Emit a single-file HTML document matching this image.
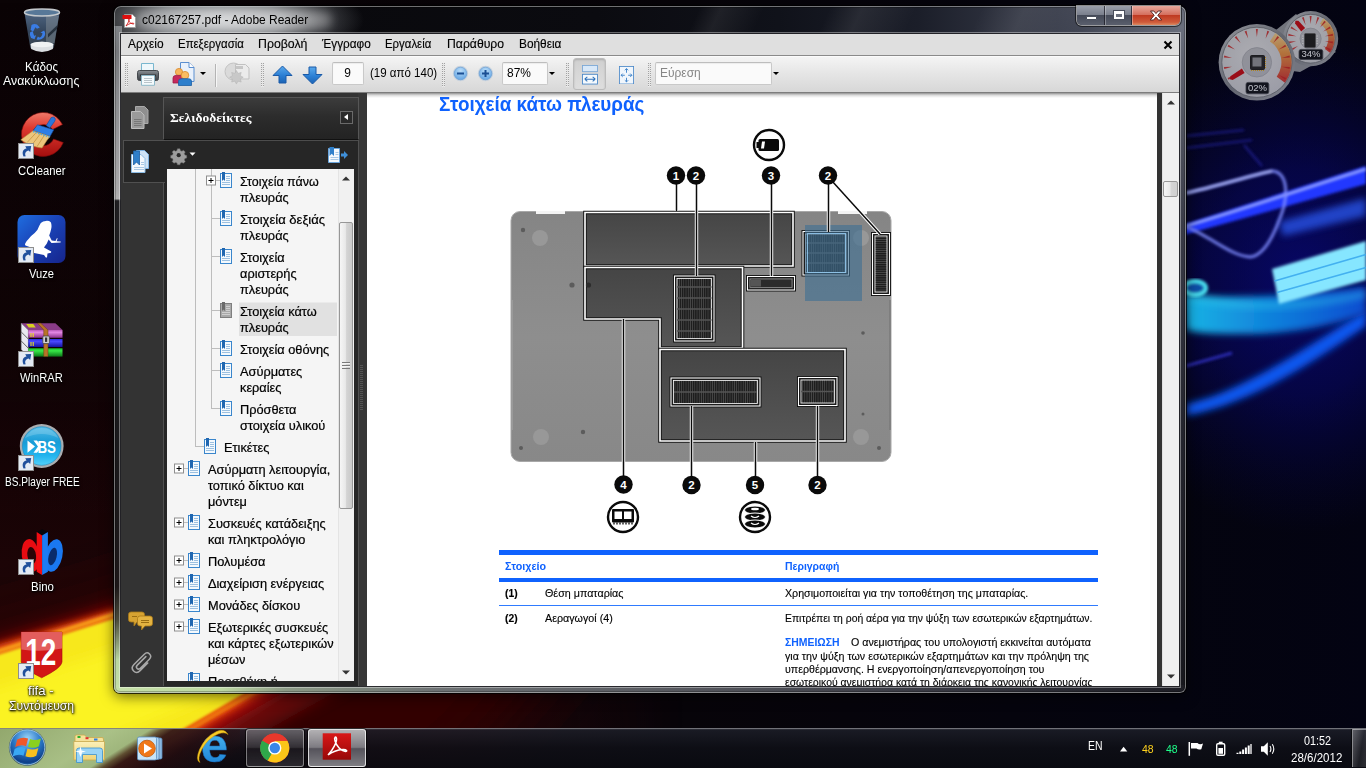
<!DOCTYPE html>
<html lang="el">
<head>
<meta charset="utf-8">
<title>c02167257.pdf - Adobe Reader</title>
<style>
*{box-sizing:border-box;margin:0;padding:0}
html,body{width:1366px;height:768px;overflow:hidden;background:#060409}
body{position:relative;font-family:"Liberation Sans","DejaVu Sans",sans-serif;font-size:12px;color:#000}
.abs{position:absolute}
.t{position:absolute;white-space:nowrap;transform-origin:0 0}
#wall{position:absolute;left:0;top:0;width:1366px;height:768px}
#win{position:absolute;left:114px;top:6px;width:1072px;height:687px;border-radius:7px 7px 6px 6px;
 box-shadow:0 0 0 1px rgba(0,0,0,.75),0 3px 14px rgba(0,0,0,.6)}
#frame{position:absolute;left:0;top:0;width:100%;height:100%;border-radius:7px 7px 6px 6px;overflow:hidden}
#client{position:absolute;left:7px;top:28px;width:1058px;height:652px;background:#fff;overflow:hidden;box-shadow:0 0 0 1px rgba(20,20,25,.85),0 0 0 2px rgba(255,255,255,.38)}
#title{position:absolute;left:28px;top:4px;height:20px;line-height:20px;font-size:13.2px;color:#000;white-space:nowrap;transform:scaleX(.907);transform-origin:0 0}
#menubar{position:absolute;left:0;top:0;width:1058px;height:22px;background:#dfdfdf;border-bottom:1px solid #8a8a8a}
#toolbar{position:absolute;left:0;top:22px;width:1058px;height:37px;background:linear-gradient(#f4f4f4,#e6e6e6 45%,#d7d7d7);border-bottom:1px solid #7d7d7d;border-top:1px solid #fbfbfb}
#nav{position:absolute;left:0;top:59px;width:246px;height:593px;background:#333}
#doc{position:absolute;left:246px;top:59px;width:812px;height:593px;background:#fff;overflow:hidden}
#taskbar{position:absolute;left:0;top:728px;width:1366px;height:40px}
.grip{position:absolute;top:6px;width:3px;height:24px;background:linear-gradient(90deg,transparent 1px,#e4e4e4 1px 2px,transparent 2px),repeating-linear-gradient(#a2a2a2 0 1px,#ececec 1px 2px)}
.tbox{position:absolute;top:5px;height:23px;background:#fafafa;border:1px solid #c9c9c9;border-top-color:#bdbdbd;box-shadow:inset 0 1px 1px rgba(0,0,0,.06);border-radius:2px;font-size:12.6px;line-height:20px}
.tarrow{position:absolute;top:15px;width:0;height:0;border-left:3px solid transparent;border-right:3px solid transparent;border-top:3.5px solid #000}
</style>
</head>
<body>
<svg id="wall" viewBox="0 0 1366 768">
<defs>
 <filter id="b2" x="-20%" y="-20%" width="140%" height="140%"><feGaussianBlur stdDeviation="1.5"/></filter>
 <filter id="b4" x="-30%" y="-60%" width="160%" height="220%"><feGaussianBlur stdDeviation="3.5"/></filter>
 <filter id="b8" x="-30%" y="-30%" width="160%" height="160%"><feGaussianBlur stdDeviation="7"/></filter>
 <filter id="b10" x="-30%" y="-30%" width="160%" height="160%"><feGaussianBlur stdDeviation="10"/></filter>
 <filter id="b16" x="-30%" y="-30%" width="160%" height="160%"><feGaussianBlur stdDeviation="16"/></filter>
 <filter id="b30" x="-50%" y="-50%" width="200%" height="200%"><feGaussianBlur stdDeviation="34"/></filter>
 <linearGradient id="hbase" x1="0" y1="0" x2="1" y2="0"><stop offset="0" stop-color="#0a0305"/><stop offset=".5" stop-color="#070409"/><stop offset=".86" stop-color="#04040f"/><stop offset="1" stop-color="#030312"/></linearGradient>
 <linearGradient id="lred" x1="0" y1="0" x2="0" y2="1"><stop offset="0" stop-color="#200406" stop-opacity="0"/><stop offset=".45" stop-color="#200406" stop-opacity=".25"/><stop offset=".75" stop-color="#2a0507" stop-opacity=".6"/><stop offset="1" stop-color="#340608" stop-opacity=".9"/></linearGradient>
 <linearGradient id="lfade" x1="0" y1="0" x2="1" y2="0"><stop offset="0" stop-color="#fff"/><stop offset=".25" stop-color="#fff"/><stop offset=".5" stop-color="#000"/></linearGradient>
 <radialGradient id="rglow" gradientUnits="userSpaceOnUse" cx="1300" cy="285" r="210" gradientTransform="translate(0 -60) scale(1 1.2)"><stop offset="0" stop-color="#0a0aa0" stop-opacity=".6"/><stop offset=".45" stop-color="#080890" stop-opacity=".4"/><stop offset="1" stop-color="#060660" stop-opacity="0"/></radialGradient>
 <linearGradient id="tubeG" x1="0" y1="0" x2="1" y2="0"><stop offset="0" stop-color="#1ab4e4"/><stop offset=".45" stop-color="#1084dc"/><stop offset="1" stop-color="#0a4cd0"/></linearGradient>
 <filter id="b1"><feGaussianBlur stdDeviation=".7"/></filter>
 <mask id="lm"><rect width="1366" height="768" fill="url(#lfade)"/></mask>
</defs>
<rect width="1366" height="768" fill="url(#hbase)"/>
<rect x="0" y="0" width="1366" height="768" fill="url(#lred)" mask="url(#lm)"/>
<!-- flame bottom-left -->
<g>
 <path d="M-60 655 L114 604 L520 462 L640 560 L520 700 L440 790 L-60 790Z" fill="#320305" filter="url(#b30)"/>
 <path d="M-40 656 L114 609 L330 535 L400 580 L292 692 L236 728 L170 790 L-40 790Z" fill="#a80e0a" filter="url(#b10)"/>
 <path d="M-40 656 L114 610 L400 513 L420 600 L253 698 L128 774 L-40 790Z" fill="#e8480c" filter="url(#b4)"/>
 <path d="M-40 662 L0 650.500 L114 614.500 L400 517" stroke="#f8a018" stroke-width="4" fill="none" filter="url(#b2)"/>
 <path d="M-40 667 L0 654 L114 618.500 L400 523 L400 602 L245 693 L117 768 L-40 790Z" fill="#f7e81e" filter="url(#b2)"/>
 <path d="M-40 700 L114 650 L300 590 L300 640 L200 700 L60 760 L-40 780Z" fill="#fbf324" filter="url(#b8)"/>
 <path d="M119 771 L248 695.500 L402 605" stroke="#f07a10" stroke-width="4" fill="none" filter="url(#b2)"/>
 <path d="M150 768 L270 700 L400 626 L430 640 L300 712 L200 768Z" fill="#6a0808" opacity=".75" filter="url(#b8)"/>
</g>
<!-- blue smoke right -->
<g>
 <rect x="1100" y="0" width="266" height="640" fill="url(#rglow)"/>
 <path d="M1186 136 L1244 130 M1186 148 L1252 140 M1244 145 L1262 166" stroke="#2525a8" stroke-width="2" opacity=".7" fill="none" filter="url(#b2)"/>
 <path d="M1279 222 L1366 198 L1366 216 L1283 236Z" fill="#2a58f0" opacity=".75" filter="url(#b4)"/>
 <path d="M1180 226 L1366 166 L1366 184 L1180 236Z" fill="#2438ff" filter="url(#b2)"/>
 <path d="M1186 226 C1240 210,1300 190,1366 169" stroke="#aebcff" stroke-width="2.500" fill="none" opacity=".9" filter="url(#b2)"/>
 <path d="M1186 193 C1215 187,1248 176,1272 171 C1288 172,1289 196,1280 218 C1272 240,1262 256,1250 257 C1236 256,1222 246,1208 238 C1198 232,1190 228,1184 226" stroke="#7f8cff" stroke-width="3" fill="none" opacity=".9" filter="url(#b2)"/>
 <path d="M1186 193 C1215 187,1248 176,1272 171" stroke="#dfe4ff" stroke-width="1.500" fill="none" opacity=".8" filter="url(#b2)"/>
 <path d="M1186 404 C1240 392,1300 352,1366 310 L1366 326 C1310 364,1250 404,1186 416Z" fill="#0c58f0" filter="url(#b4)"/>
 <path d="M1186 366 L1232 353" stroke="#3838d8" stroke-width="2.500" opacity=".85" filter="url(#b2)"/>
 <path d="M1184 294 C1230 300,1300 296,1366 286 L1366 314 C1330 326,1290 334,1250 334 C1220 334,1200 334,1186 330Z" fill="url(#tubeG)" filter="url(#b4)"/>
 <path d="M1190 297 C1250 312,1320 305,1366 294" stroke="#38d8f0" stroke-width="6" fill="none" opacity=".4" filter="url(#b4)"/>
 <ellipse cx="1195" cy="288" rx="11" ry="7" fill="#0a50a8" stroke="#48e0f0" stroke-width="4" filter="url(#b2)"/>
 <path d="M1272 269 L1366 241 L1366 280 L1279 304Z" fill="#86e6ff" filter="url(#b2)"/>
 <path d="M1274.500 281 L1366 254.500 M1277 292.500 L1366 267.500" stroke="#38a8ee" stroke-width="1.800" opacity=".85" filter="url(#b1)"/>
</g>

</svg>

<div id="desktop" class="abs" style="left:0;top:0;width:114px;height:728px">

<svg class="abs" style="left:0;top:0" width="114" height="728" viewBox="0 0 114 728" font-family="Liberation Sans, sans-serif">
<defs>
 <linearGradient id="binG" x1="0" y1="0" x2="0" y2="1"><stop offset="0" stop-color="#4e6480"/><stop offset=".5" stop-color="#33445a"/><stop offset="1" stop-color="#3c4650"/></linearGradient>
 <linearGradient id="ccG" x1="0" y1="0" x2="0" y2="1"><stop offset="0" stop-color="#f07a6a"/><stop offset=".35" stop-color="#de3a30"/><stop offset="1" stop-color="#a40e0e"/></linearGradient>
 <linearGradient id="wrP" x1="0" y1="0" x2="0" y2="1"><stop offset="0" stop-color="#b858b8"/><stop offset=".3" stop-color="#e488e4"/><stop offset="1" stop-color="#8a308a"/></linearGradient>
 <linearGradient id="wrB" x1="0" y1="0" x2="0" y2="1"><stop offset="0" stop-color="#2a2ae0"/><stop offset=".3" stop-color="#4a4aff"/><stop offset="1" stop-color="#1414a0"/></linearGradient>
 <linearGradient id="wrGn" x1="0" y1="0" x2="0" y2="1"><stop offset="0" stop-color="#18b828"/><stop offset=".3" stop-color="#38e848"/><stop offset="1" stop-color="#0c7818"/></linearGradient>
 <linearGradient id="vzG" x1="0" y1="0" x2="1" y2="1"><stop offset="0" stop-color="#1f6ee0"/><stop offset=".45" stop-color="#1a44b8"/><stop offset="1" stop-color="#16248c"/></linearGradient>
 <linearGradient id="bsG" x1="0" y1="0" x2="0" y2="1"><stop offset="0" stop-color="#52bce8"/><stop offset=".4" stop-color="#189cd6"/><stop offset=".75" stop-color="#22b4ee"/><stop offset="1" stop-color="#52d0fa"/></linearGradient>
 <linearGradient id="ffG" x1="0" y1="0" x2="0" y2="1"><stop offset="0" stop-color="#e03a3a"/><stop offset=".5" stop-color="#d01818"/><stop offset="1" stop-color="#b01010"/></linearGradient>
</defs>
<!-- recycle bin -->
<g>
 <path d="M24.500 13 L30.300 48 Q42 54.500 53.800 48 L59.500 13Z" fill="url(#binG)"/>
 <path d="M46 16 L58.800 16 L54.500 43 L46 43Z" fill="#8a929a" opacity=".45"/>
 <path d="M48 34 L57.500 25 L57 29 L48 37.500Z" fill="#1a2430" opacity=".8"/>
 <ellipse cx="42" cy="12.500" rx="17.500" ry="3.400" fill="#587898" stroke="#c4c8cc" stroke-width="1.500"/>
 <path d="M30.600 44 Q42 39.500 53.400 44 L52.800 49 Q42 55 31.200 49Z" fill="#dcdfe2"/>
 <ellipse cx="42" cy="44.500" rx="11.300" ry="2.800" fill="#f0f2f3"/>
 <path d="M31.500 25 q2.500 -1.500 5.500 -.5 l2.800 3 l-2.800 1.200 l-1.600 -1.400 l-2.200 4.200 l-2.600 -1.600z M30 32.500 l2.600 -1.400 l1.500 4.600 l2 -.4 l-1.600 4 l-3.400 -1.200 q-1.800 -2.800 -1.100 -5.600z M36.500 39.600 l1.400 -3 l1.400 1 q2.600 -.6 3.200 -4.400 l-2 -.6 l3.600 -2.200 q2.400 3.400 -.6 7.400 q-3 2.800 -7 1.800z" fill="#3a7ce4"/>
</g>
<!-- ccleaner -->
<g>
 <path d="M62.500 124.500 A21.700 22 0 1 0 63.300 142.600 L53.500 139 A11 10.500 0 1 1 52.600 129.600Z" fill="url(#ccG)" stroke="#7a0808" stroke-width=".6"/>
 <path d="M51.200 117.600 q2.200 -1.400 3.800 .4 q.8 1.600 -.4 3.400 l-4.800 6.600 l-3.600 -2.400z" fill="#2a76dc" stroke="#164a9c" stroke-width=".6"/>
 <path d="M37.500 124.800 L53.750 129.800 L50 136.500 L33 130.700Z" fill="#2e7ee4" stroke="#164a9c" stroke-width=".6"/>
 <path d="M33 130.700 L50 136.500 L46.700 140.700 L42 148 Q31 147 20.800 139.800Z" fill="#ecc67c" stroke="#b8893a" stroke-width=".6"/>
 <path d="M36.500 132.300 L27 142.600 M40.500 133.600 L32 144.800 M44.500 135 L37 146.600" stroke="#c89a48" stroke-width=".9"/>
 <path d="M33 131.500 L49.600 137.200" stroke="#4aa8e8" stroke-width="1.400" stroke-dasharray="1.500 1.200"/>
</g>
<g transform="translate(18,143)"><rect x=".5" y=".5" width="15" height="15" fill="#e3eaf4" stroke="#8e8e8e" stroke-width="1"/><path d="M5.500 13.500 C3.500 9,5.500 5.800,8.500 5.600 L7.200 3.200 L13.200 3 L12.200 9 L10.600 7.400 C8 8,6.200 10,7.800 13.200Z" fill="#20509c"/></g>
<!-- vuze -->
<g>
 <rect x="17.500" y="215" width="48" height="48" rx="7" fill="url(#vzG)"/>
 <path d="M45.800 220.900 Q49 220.500 50.800 222.200 Q52 225 51.200 228.800 Q50.500 232.500 49.200 235.500 L51.700 240.600 L55.500 241 L57 238 L57.600 238.400 L56.600 241.200 L60.800 241.600 L60.600 242.600 L51.500 243 L48.600 239.600 L46.700 243.800 Q45 246 44 247.500 L51.200 251.600 L51 252.800 L47.500 253.600 L47 257.400 L45.800 257.600 L44 255 L34.200 253 Q32 251 31 247.500 L25.500 245.600 Q24.500 244.500 25.500 243 Q27 240.500 29 238.600 Q30.500 236.500 31.700 235.500 Q35 233 37.500 229.700 Q39 226 40.800 223 Q43 221 45.800 220.900Z" fill="#fff"/>
</g>
<g transform="translate(18,247)"><rect x=".5" y=".5" width="15" height="15" fill="#e3eaf4" stroke="#8e8e8e" stroke-width="1"/><path d="M5.500 13.500 C3.500 9,5.500 5.800,8.500 5.600 L7.200 3.200 L13.200 3 L12.200 9 L10.600 7.400 C8 8,6.200 10,7.800 13.200Z" fill="#20509c"/></g>
<!-- winrar -->
<g>
 <path d="M21.250 323.250 H55.400 L62.500 330 H28.300Z" fill="#8a3c88"/>
 <path d="M26.250 324 h7 l2.500 3.500 h-7z" fill="#d8d020"/>
 <path d="M21.250 323.250 L28.300 330 V356.600 L21.250 349.500Z" fill="#e8e8f0" stroke="#8a8a98" stroke-width=".5"/>
 <path d="M21.250 332 L28.300 339 M21.250 341 L28.300 348.200" stroke="#555" stroke-width=".9"/>
 <rect x="28.300" y="330" width="34.200" height="7.800" fill="url(#wrP)"/>
 <rect x="28.300" y="339" width="34.200" height="8" fill="url(#wrB)"/>
 <rect x="28.300" y="348.250" width="34.200" height="8.350" fill="url(#wrGn)"/>
 <path d="M31 333 v4 M33.200 333 v4 M31 342 v4 M33.200 342 v4" stroke="#e8e020" stroke-width="1.100"/>
 <path d="M37.500 323.250 h3.300 l7.200 6.750 v26.600 h-4.250 v-26.600z" fill="#b87428" stroke="#6a3c0c" stroke-width=".5"/>
 <rect x="42.800" y="336" width="6.600" height="7.600" rx="1" fill="#d0d0d4" stroke="#444" stroke-width=".8"/><rect x="45" y="337.500" width="2.200" height="4.400" fill="#333"/>
</g>
<g transform="translate(18,351)"><rect x=".5" y=".5" width="15" height="15" fill="#e3eaf4" stroke="#8e8e8e" stroke-width="1"/><path d="M5.500 13.500 C3.500 9,5.500 5.800,8.500 5.600 L7.200 3.200 L13.200 3 L12.200 9 L10.600 7.400 C8 8,6.200 10,7.800 13.200Z" fill="#20509c"/></g>
<!-- bs.player -->
<g>
 <circle cx="41.700" cy="446" r="21.900" fill="#a9adb0"/>
 <circle cx="41.700" cy="446" r="19.300" fill="url(#bsG)" stroke="#1a88c0" stroke-width=".6"/>
 <path d="M25 438 A19 19 0 0 1 58.400 438 Q41.700 430 25 438Z" fill="#fff" opacity=".18"/>
 <path d="M27.500 440.600 L35 446.600 L27.500 452.700Z" fill="#fff"/>
 <path d="M33.500 440.600 h3.500 l4.500 6 l-4.500 6.100 h-3.500 l4.500 -6.100z" fill="#fff"/>
 <text x="46.700" y="452.700" font-size="16.800" font-weight="700" fill="#fff" text-anchor="middle" textLength="18.500" lengthAdjust="spacingAndGlyphs">BS</text>
</g>
<g transform="translate(18,455)"><rect x=".5" y=".5" width="15" height="15" fill="#e3eaf4" stroke="#8e8e8e" stroke-width="1"/><path d="M5.500 13.500 C3.500 9,5.500 5.800,8.500 5.600 L7.200 3.200 L13.200 3 L12.200 9 L10.600 7.400 C8 8,6.200 10,7.800 13.200Z" fill="#20509c"/></g>
<!-- bino -->
<g>
 <path d="M36.700 532 L42.100 529.200 L47.900 532 L42.100 535.400Z" fill="#05060c"/>
 <ellipse cx="30.600" cy="555.500" rx="8.800" ry="16.500" fill="#e80c12" transform="rotate(-8 30.600 555.500)"/>
 <ellipse cx="31.700" cy="555.500" rx="4.300" ry="8.500" fill="#2a0406" transform="rotate(-8 31.700 555.500)"/>
 <path d="M36.700 532 L42.100 535.400 V575 L36.700 571.700Z" fill="#f00c12"/>
 <ellipse cx="53.800" cy="555.500" rx="8.600" ry="16.500" fill="#1a78f0" transform="rotate(12 53.800 555.500)"/>
 <ellipse cx="52.600" cy="556.500" rx="4" ry="9" fill="#0a2c6a" transform="rotate(14 52.600 556.500)"/>
 <path d="M42.100 535.400 L47.900 532 V571.700 L42.100 575Z" fill="#1c7cf4"/>
</g>
<g transform="translate(18,559)"><rect x=".5" y=".5" width="15" height="15" fill="#e3eaf4" stroke="#8e8e8e" stroke-width="1"/><path d="M5.500 13.500 C3.500 9,5.500 5.800,8.500 5.600 L7.200 3.200 L13.200 3 L12.200 9 L10.600 7.400 C8 8,6.200 10,7.800 13.200Z" fill="#20509c"/></g>
<!-- fifa -->
<g>
 <path d="M21.250 632 H62 V662 Q61.500 668 41.700 677.800 Q21.800 668 21.250 662Z" fill="#d21616" stroke="#a80c0c" stroke-width=".6"/>
 <path d="M21.250 632 H62 V648.500 Q41.700 652.500 21.250 649.500Z" fill="#e66a6a" opacity=".85"/>
 <text x="40.800" y="665" font-size="37.700" font-weight="700" fill="#fff" text-anchor="middle" textLength="31" lengthAdjust="spacingAndGlyphs">12</text>
</g>
<g transform="translate(18,663)"><rect x=".5" y=".5" width="15" height="15" fill="#e3eaf4" stroke="#8e8e8e" stroke-width="1"/><path d="M5.500 13.500 C3.500 9,5.500 5.800,8.500 5.600 L7.200 3.200 L13.200 3 L12.200 9 L10.600 7.400 C8 8,6.200 10,7.800 13.200Z" fill="#20509c"/></g>
</svg>

<span class="t" style="left:24.7px;top:58.6px;font-size:12.6px;line-height:16px;transform:scaleX(0.929);color:#fff;text-shadow:0 1px 2px #000,0 0 2px #000,1px 1px 3px rgba(0,0,0,.9);">Κάδος</span>
<span class="t" style="left:3.0px;top:73.4px;font-size:12.6px;line-height:16px;transform:scaleX(0.979);color:#fff;text-shadow:0 1px 2px #000,0 0 2px #000,1px 1px 3px rgba(0,0,0,.9);">Ανακύκλωσης</span>
<span class="t" style="left:18.0px;top:162.8px;font-size:12.6px;line-height:16px;transform:scaleX(0.895);color:#fff;text-shadow:0 1px 2px #000,0 0 2px #000,1px 1px 3px rgba(0,0,0,.9);">CCleaner</span>
<span class="t" style="left:29.0px;top:266.4px;font-size:12.6px;line-height:16px;transform:scaleX(0.885);color:#fff;text-shadow:0 1px 2px #000,0 0 2px #000,1px 1px 3px rgba(0,0,0,.9);">Vuze</span>
<span class="t" style="left:20.3px;top:370.3px;font-size:12.6px;line-height:16px;transform:scaleX(0.884);color:#fff;text-shadow:0 1px 2px #000,0 0 2px #000,1px 1px 3px rgba(0,0,0,.9);">WinRAR</span>
<span class="t" style="left:4.7px;top:474.3px;font-size:12.6px;line-height:16px;transform:scaleX(0.802);color:#fff;text-shadow:0 1px 2px #000,0 0 2px #000,1px 1px 3px rgba(0,0,0,.9);">BS.Player FREE</span>
<span class="t" style="left:30.5px;top:578.5px;font-size:12.6px;line-height:16px;transform:scaleX(0.908);color:#fff;text-shadow:0 1px 2px #000,0 0 2px #000,1px 1px 3px rgba(0,0,0,.9);">Bino</span>
<span class="t" style="left:28.4px;top:682.8px;font-size:12.6px;line-height:16px;transform:scaleX(1.045);color:#fff;text-shadow:0 1px 2px #000,0 0 2px #000,1px 1px 3px rgba(0,0,0,.9);">fifa -</span>
<span class="t" style="left:8.6px;top:697.6px;font-size:12.6px;line-height:16px;transform:scaleX(0.965);color:#fff;text-shadow:0 1px 2px #000,0 0 2px #000,1px 1px 3px rgba(0,0,0,.9);">Συντόμευση</span>
</div>

<svg id="gadget" class="abs" style="left:1206px;top:0" width="140" height="110" viewBox="1206 0 140 110" font-family="Liberation Sans, sans-serif" opacity=".8">
<defs>
<linearGradient id="rimG" x1="0" y1="0" x2="1" y2="1"><stop offset="0" stop-color="#b9bcc2"/><stop offset=".5" stop-color="#7b7e86"/><stop offset="1" stop-color="#a5a8ae"/></linearGradient>
<radialGradient id="faceG" cx=".45" cy=".4" r=".7"><stop offset="0" stop-color="#d6d6da"/><stop offset="1" stop-color="#bfc0c6"/></radialGradient>
<linearGradient id="hotG" x1="0" y1="0" x2="0" y2="1"><stop offset="0" stop-color="#e8c888"/><stop offset=".4" stop-color="#e08a3a"/><stop offset="1" stop-color="#c82828"/></linearGradient>
</defs>
<path d="M1276 30 L1296 14 L1336 52 L1300 72 L1285 70Z" fill="#8f9299"/>
<circle cx="1310.6" cy="38.7" r="27.6" fill="url(#rimG)"/>
<circle cx="1310.6" cy="38.7" r="24.400000000000002" fill="url(#faceG)" stroke="#6a6d74" stroke-width=".8"/>
<path d="M1323.3 18.3 A24.0 24.0 0 0 1 1330.0 52.8 L1324.9 49.1 A17.664 17.664 0 0 0 1320.0 23.7Z" fill="url(#hotG)" opacity=".92"/>
<path d="M1290.5 49.1 L1291.5 50.9 L1298.0 46.0Z" fill="#c42424" opacity=".85"/>
<path d="M1288.2 41.6 L1288.5 43.6 L1296.2 41.2Z" fill="#c42424" opacity=".85"/>
<path d="M1288.5 33.8 L1288.2 35.8 L1296.2 36.2Z" fill="#c42424" opacity=".85"/>
<path d="M1291.5 26.5 L1290.5 28.3 L1298.0 31.4Z" fill="#c42424" opacity=".85"/>
<path d="M1296.8 20.7 L1295.3 22.0 L1301.2 27.5Z" fill="#c42424" opacity=".85"/>
<path d="M1303.8 17.1 L1301.9 17.8 L1305.6 25.0Z" fill="#c42424" opacity=".85"/>
<path d="M1311.6 16.1 L1309.6 16.1 L1310.6 24.1Z" fill="#c42424" opacity=".85"/>
<path d="M1319.3 17.8 L1317.4 17.1 L1315.6 25.0Z" fill="#c42424" opacity=".85"/>
<path d="M1325.9 22.0 L1324.4 20.7 L1320.0 27.5Z" fill="#c42424" opacity=".85"/>
<path d="M1330.7 28.3 L1329.7 26.5 L1323.2 31.4Z" fill="#c42424" opacity=".85"/>
<path d="M1333.0 35.8 L1332.7 33.8 L1325.0 36.2Z" fill="#c42424" opacity=".85"/>
<path d="M1332.7 43.6 L1333.0 41.6 L1325.0 41.2Z" fill="#c42424" opacity=".85"/>
<path d="M1329.7 50.9 L1330.7 49.1 L1323.2 46.0Z" fill="#c42424" opacity=".85"/>
<circle cx="1310.6" cy="38.7" r="10.6" fill="#b4b5bb" stroke="#a0a1a8" stroke-width=".8"/>
<path d="M1305.1 28.1 L1298.4 20.8 L1295.5 20.7 L1295.1 23.6 L1301.2 31.5Z" fill="#c01018"/>
<rect x="1304.500" y="33.500" width="11" height="14" rx="1" fill="#222" stroke="#555" stroke-width=".6"/><path d="M1303.500 36 h-1.500 M1303.500 38.500 h-1.500 M1303.500 41 h-1.500 M1303.500 43.500 h-1.500 M1316.500 36 h1.500 M1316.500 38.500 h1.500 M1316.500 41 h1.500 M1316.500 43.500 h1.500" stroke="#ddd" stroke-width="1"/>
<rect x="1299" y="49.4" width="23.799999999999955" height="10.100000000000001" rx="2" fill="#16181e" stroke="#4a4c54" stroke-width=".8"/>
<text x="1310.9" y="56.9" font-size="9.500" fill="#eef0f4" text-anchor="middle">34%</text>
<circle cx="1256.9" cy="62.3" r="38.3" fill="url(#rimG)"/>
<circle cx="1256.9" cy="62.3" r="35.099999999999994" fill="url(#faceG)" stroke="#6a6d74" stroke-width=".8"/>
<path d="M1275.3 32.9 A34.699999999999996 34.699999999999996 0 0 1 1285.0 82.7 L1276.7 76.7 A24.512 24.512 0 0 0 1269.9 41.5Z" fill="url(#hotG)" opacity=".92"/>
<path d="M1227.6 78.1 L1228.6 79.8 L1235.0 74.9Z" fill="#c42424" opacity=".85"/>
<path d="M1223.9 67.1 L1224.3 69.1 L1232.0 66.7Z" fill="#c42424" opacity=".85"/>
<path d="M1224.3 55.5 L1223.9 57.5 L1232.0 57.9Z" fill="#c42424" opacity=".85"/>
<path d="M1228.6 44.8 L1227.6 46.5 L1235.0 49.6Z" fill="#c42424" opacity=".85"/>
<path d="M1236.3 36.1 L1234.7 37.4 L1240.6 42.9Z" fill="#c42424" opacity=".85"/>
<path d="M1246.5 30.7 L1244.6 31.4 L1248.2 38.5Z" fill="#c42424" opacity=".85"/>
<path d="M1257.9 29.0 L1255.9 29.0 L1256.9 37.0Z" fill="#c42424" opacity=".85"/>
<path d="M1269.2 31.4 L1267.3 30.7 L1265.6 38.5Z" fill="#c42424" opacity=".85"/>
<path d="M1279.1 37.4 L1277.5 36.1 L1273.2 42.9Z" fill="#c42424" opacity=".85"/>
<path d="M1286.2 46.5 L1285.2 44.8 L1278.8 49.6Z" fill="#c42424" opacity=".85"/>
<path d="M1289.9 57.5 L1289.5 55.5 L1281.8 57.9Z" fill="#c42424" opacity=".85"/>
<path d="M1289.5 69.1 L1289.9 67.1 L1281.8 66.7Z" fill="#c42424" opacity=".85"/>
<path d="M1285.2 79.8 L1286.2 78.1 L1278.8 74.9Z" fill="#c42424" opacity=".85"/>
<circle cx="1256.9" cy="62.3" r="14.7" fill="#b4b5bb" stroke="#a0a1a8" stroke-width=".8"/>
<path d="M1241.9 68.6 L1230.4 76.3 L1229.9 79.2 L1232.7 80.0 L1244.6 73.0Z" fill="#c01018"/>
<rect x="1250.500" y="55.500" width="14" height="14" rx="1" fill="#2a2a2c" stroke="#111" stroke-width=".8"/><rect x="1252.500" y="57.500" width="9" height="9" fill="#8e8f94"/><path d="M1251 70.500 h13 M1265.500 57 v12" stroke="#d8a020" stroke-width="1" stroke-dasharray="1 1"/>
<rect x="1246" y="82.4" width="22.799999999999955" height="11.399999999999991" rx="2" fill="#16181e" stroke="#4a4c54" stroke-width=".8"/>
<text x="1257.4" y="91.2" font-size="9.500" fill="#eef0f4" text-anchor="middle">02%</text>
</svg>

<div id="win">
 <div id="frame"><div class="abs" style="left:0;top:0;width:1072px;height:687px;background:#15161b"></div>
<div class="abs" style="left:0;top:0;width:1072px;height:30px;background:linear-gradient(90deg,#08080b 0,#0b0b10 45%,#10121a 62%,#1b1e29 75%,#3a3e4c 88%,#5d6270 97%,#6a6f7d 100%)"></div>
<div class="abs" style="left:0;top:0;width:1072px;height:30px;background:linear-gradient(115deg,transparent 0 54%,rgba(255,255,255,.07) 56%,transparent 60%,transparent 66%,rgba(255,255,255,.08) 69%,transparent 74%,transparent 80%,rgba(255,255,255,.08) 84%,transparent 90%)"></div>
<div class="abs" style="left:1064px;top:20px;width:8px;height:667px;background:linear-gradient(#6a6f7d 0,#5c606c 8%,#3a3c48 30%,#24252e 60%,#17171d 100%)"></div>
<div class="abs" style="left:0;top:20px;width:8px;height:667px;background:linear-gradient(#6c6e72 0,#8a8b8e 10%,#a9a9aa 24.500%,#b2b2b2 25.900%,#1f1f21 26.200%,#1a1a1c 60%,#1c1718 84%,#4a4a3a 89%,#b9d6a0 95%,#c6e0a8 100%)"></div>
<div class="abs" style="left:0;top:679px;width:1072px;height:8px;background:linear-gradient(90deg,#c6e0a8 0,#bcd8a2 10%,#8c9a86 16%,#6e7274 30%,#5a5c62 50%,#3a3b44 75%,#1d1d24 100%)"></div>
<div class="abs" style="left:0;top:0;width:1072px;height:687px;border-radius:7px 7px 6px 6px;box-shadow:inset 0 0 0 1px rgba(255,255,255,.42),inset 0 0 0 2px rgba(0,0,0,.25)"></div>
<div class="abs" style="left:-40px;top:-30px;width:290px;height:88px;background:radial-gradient(ellipse closest-side at center,rgba(200,204,208,.8) 0,rgba(185,189,193,.66) 45%,rgba(160,165,170,.3) 75%,rgba(150,155,160,0) 100%)"></div>
<div class="abs" style="left:22px;top:2px;width:196px;height:24px;border-radius:12px;background:radial-gradient(ellipse at center,rgba(255,255,255,.62) 0,rgba(255,255,255,.5) 45%,rgba(255,255,255,0) 100%);filter:blur(4px)"></div>
</div>
 <div id="title">c02167257.pdf - Adobe Reader</div>
 <div class="abs" style="left:963px;top:0;width:103px;height:19px;border-radius:0 0 5px 5px;box-shadow:0 0 0 1px rgba(255,255,255,.55),0 0 0 2px rgba(0,0,0,.55);overflow:hidden">
 <div class="abs" style="left:0;top:0;width:28px;height:19px;background:linear-gradient(#9a9fab 0,#7b808d 45%,#454a58 50%,#5a5f6d 100%);border-right:1px solid rgba(20,20,30,.7)"></div>
 <div class="abs" style="left:28px;top:0;width:27px;height:19px;background:linear-gradient(#9a9fab 0,#7b808d 45%,#454a58 50%,#5a5f6d 100%);border-right:1px solid rgba(20,20,30,.7);box-shadow:inset 1px 0 0 rgba(255,255,255,.3)"></div>
 <div class="abs" style="left:55px;top:0;width:48px;height:19px;background:linear-gradient(#e7a79b 0,#d5705f 45%,#bf3a22 50%,#cf5a3a 85%,#dd8a60 100%);box-shadow:inset 1px 0 0 rgba(255,255,255,.35)"></div>
 <div class="abs" style="left:9px;top:10px;width:11px;height:4px;background:#fff;border:1px solid #4a4f5c;border-radius:1px"></div>
 <div class="abs" style="left:37px;top:5px;width:10px;height:8px;border:2px solid #fff;border-top-width:3px;outline:1px solid #4a4f5c;background:#6a6f7c"></div>
 <svg class="abs" style="left:71px;top:3px" width="16" height="13" viewBox="0 0 16 13"><path d="M2.5 2 L5.8 2 L8 4.6 L10.2 2 L13.5 2 L9.8 6.3 L13.8 11 L10.4 11 L8 8.1 L5.6 11 L2.2 11 L6.2 6.3Z" fill="#fff" stroke="#5a2a28" stroke-width="1"/></svg>
</div>
<svg class="abs" style="left:7.500px;top:6.500px" width="16" height="16" viewBox="0 0 16 16"><path d="M2.5 1.5 h8 l3 3 v10 h-11z" fill="#fff" stroke="#999" stroke-width=".8"/><rect x="0.5" y="2" width="9" height="4" rx=".6" fill="#e01010"/><path d="M4 13 C6 10,7.5 7.5,7.3 6.2 C7 5.2,6.2 6,6.6 7.4 C7.2 9.4,9.5 11,11.5 11 C12.6 10.8,11.6 10,10 10.2 C8 10.4,5.5 11.6,4 13Z" fill="none" stroke="#d01818" stroke-width=".9"/></svg>

 <div id="client">
  <div id="menubar"><span class="t" style="left:7.3px;top:1.9px;font-size:12.5px;line-height:16px;transform:scaleX(0.954);-webkit-text-stroke:.15px #000;">Αρχείο</span>
<span class="t" style="left:57.2px;top:1.9px;font-size:12.5px;line-height:16px;transform:scaleX(0.915);-webkit-text-stroke:.15px #000;">Επεξεργασία</span>
<span class="t" style="left:137.4px;top:1.9px;font-size:12.5px;line-height:16px;transform:scaleX(0.984);-webkit-text-stroke:.15px #000;">Προβολή</span>
<span class="t" style="left:200.6px;top:1.9px;font-size:12.5px;line-height:16px;transform:scaleX(0.944);-webkit-text-stroke:.15px #000;">Έγγραφο</span>
<span class="t" style="left:264.3px;top:1.9px;font-size:12.5px;line-height:16px;transform:scaleX(0.912);-webkit-text-stroke:.15px #000;">Εργαλεία</span>
<span class="t" style="left:325.9px;top:1.9px;font-size:12.5px;line-height:16px;transform:scaleX(0.977);-webkit-text-stroke:.15px #000;">Παράθυρο</span>
<span class="t" style="left:397.6px;top:1.9px;font-size:12.5px;line-height:16px;transform:scaleX(0.947);-webkit-text-stroke:.15px #000;">Βοήθεια</span>
<svg class="abs" style="left:1042px;top:6px" width="10" height="10" viewBox="0 0 10 10"><path d="M1.500 1.500 L8.500 8.500 M8.500 1.500 L1.500 8.500" stroke="#000" stroke-width="2.100"/></svg></div>
  <div id="toolbar"><div class="grip" style="left:4px"></div>
<!-- printer -->
<svg class="abs" style="left:15px;top:5px" width="24" height="25" viewBox="0 0 24 25">
 <defs><linearGradient id="pg1" x1="0" y1="0" x2="0" y2="1"><stop offset="0" stop-color="#8a8f94"/><stop offset=".5" stop-color="#5c6166"/><stop offset="1" stop-color="#3c4045"/></linearGradient></defs>
 <path d="M5.5 1.5 h12 v9 h-12z" fill="#eef7fb" stroke="#79b7cf" stroke-width="1"/>
 <rect x="1.5" y="8.5" width="21" height="10" rx="2" fill="url(#pg1)" stroke="#44484c" stroke-width="1"/>
 <rect x="4" y="12.5" width="16" height="2" fill="#2f3236"/>
 <path d="M5.5 13.5 h13 v9.8 h-13z" fill="#f4fafc" stroke="#8fb9c9" stroke-width="1"/>
 <path d="M8 16.5 h8 M8 18.5 h8 M8 20.5 h8" stroke="#b9c4ca" stroke-width="1"/>
</svg>
<!-- people/collab -->
<svg class="abs" style="left:51px;top:4px" width="24" height="25" viewBox="0 0 24 25">
 <path d="M8.5 1.5 h8.5 l5 5 v14 h-13.5z" fill="#e9f1fb" stroke="#5b8fd0" stroke-width="1"/>
 <path d="M17 1.5 v5 h5" fill="#fff" stroke="#5b8fd0" stroke-width="1"/>
 <circle cx="7" cy="11" r="3.6" fill="#f7b35a" stroke="#d98a2c" stroke-width=".8"/>
 <path d="M1 22 v-5 q0 -2.6 3 -2.6 h6 q3 0 3 2.6 v5z" fill="#c7285c" stroke="#9a1a45" stroke-width=".8"/>
 <circle cx="13" cy="14.2" r="3.8" fill="#fbbd62" stroke="#d98a2c" stroke-width=".8"/>
 <path d="M6.5 24.5 v-4.2 q0 -2.6 3 -2.6 h7 q3 0 3 2.6 v4.2z" fill="#2e7fcc" stroke="#1d5fa3" stroke-width=".8"/>
</svg>
<div class="tarrow" style="left:79px"></div>
<div class="abs" style="left:94px;top:7px;width:1px;height:23px;background:#b4b4b4;box-shadow:1px 0 0 #f6f6f6"></div>
<!-- grey globe -->
<svg class="abs" style="left:103px;top:4px" width="27" height="26" viewBox="0 0 27 26" opacity=".9">
 <circle cx="9.5" cy="10.5" r="8.5" fill="#d9d9d9" stroke="#bdbdbd" stroke-width="1"/>
 <path d="M11.5 3.5 h10 l3.5 3.500 v11 h-13.5z" fill="#ececec" stroke="#bdbdbd" stroke-width="1"/>
 <rect x="12" y="5" width="7" height="3" fill="#c2c2c2"/>
 <path d="M13.500 13 l1.700 3.200 3.500 -1 -1 3.500 3.200 1.700 -3.200 1.700 1 3.500 -3.500 -1 -1.700 3.200 -1.700 -3.200 -3.500 1 1 -3.500 -3.200 -1.700 3.200 -1.700 -1 -3.500 3.500 1z" fill="#c6c6c6" stroke="#b0b0b0" stroke-width=".6" transform="translate(0,-2.500) scale(.92)"/>
</svg>
<div class="grip" style="left:140px"></div>
<!-- up arrow -->
<svg class="abs" style="left:151px;top:8px" width="21" height="19" viewBox="0 0 21 19">
 <defs><linearGradient id="ag" x1="0" y1="0" x2="0" y2="1"><stop offset="0" stop-color="#5aa9ec"/><stop offset=".55" stop-color="#2b7fd4"/><stop offset="1" stop-color="#1c63b4"/></linearGradient></defs>
 <path d="M10.500 1 L20 10.500 H14 V18 H7 V10.500 H1Z" fill="url(#ag)" stroke="#1a5aa8" stroke-width="1" stroke-linejoin="round"/>
</svg>
<svg class="abs" style="left:181px;top:9px" width="21" height="19" viewBox="0 0 21 19">
 <path d="M10.500 18 L20 8.500 H14 V1 H7 V8.500 H1Z" fill="url(#ag)" stroke="#1a5aa8" stroke-width="1" stroke-linejoin="round"/>
</svg>
<div class="tbox" style="left:211px;width:32px;text-align:center"><span style="display:inline-block;transform:scaleX(.95)">9</span></div>
<div class="abs" style="left:249px;top:6px;font-size:12.6px;line-height:20px;white-space:nowrap;transform:scaleX(.915);transform-origin:0 0">(19 από 140)</div>
<div class="grip" style="left:321px"></div>
<!-- zoom out/in -->
<svg class="abs" style="left:331px;top:7.500px" width="17" height="17" viewBox="0 0 17 17">
 <defs><radialGradient id="zg" cx=".5" cy=".3" r=".7"><stop offset="0" stop-color="#b9dcf8"/><stop offset="1" stop-color="#5fa2e2"/></radialGradient></defs>
 <circle cx="8.500" cy="8.500" r="7" fill="url(#zg)" stroke="#c9d3dd" stroke-width="1.4"/><circle cx="8.500" cy="8.500" r="6.300" fill="none" stroke="#6a9fd6" stroke-width=".7"/>
 <rect x="5" y="7.500" width="7" height="2" fill="#1b4f94"/>
</svg>
<svg class="abs" style="left:356px;top:7.500px" width="17" height="17" viewBox="0 0 17 17">
 <circle cx="8.500" cy="8.500" r="7" fill="url(#zg)" stroke="#c9d3dd" stroke-width="1.400"/><circle cx="8.500" cy="8.500" r="6.300" fill="none" stroke="#6a9fd6" stroke-width=".7"/>
 <path d="M5 7.500 h2.500 v-2.500 h2 v2.500 h2.500 v2 h-2.500 v2.500 h-2 v-2.500 h-2.500z" fill="#1b4f94"/>
</svg>
<div class="tbox" style="left:381px;width:46px;padding-left:4px"><span style="display:inline-block;transform:scaleX(.95);transform-origin:0 0">87%</span></div>
<div class="tarrow" style="left:428px"></div>
<div class="grip" style="left:445px"></div>
<!-- fit width (pressed) -->
<div class="abs" style="left:452px;top:1px;width:33px;height:32px;border-radius:3px;background:linear-gradient(#d0d0d0,#dedede);border:1px solid #bcbcbc;box-shadow:inset 0 1px 2px rgba(0,0,0,.18)"></div>
<svg class="abs" style="left:461px;top:8px" width="16" height="19.500" viewBox="0 0 18 22">
 <rect x=".5" y=".5" width="17" height="7" fill="#d8e8f8" stroke="#7aa7d6"/>
 <rect x=".5" y="10.500" width="17" height="11" fill="#f4f9fd" stroke="#4b88c8"/>
 <path d="M3 16 h12 M3 16 l3 -2.500 M3 16 l3 2.500 M15 16 l-3 -2.500 M15 16 l-3 2.500" stroke="#2f72bb" stroke-width="1.200" fill="none"/>
</svg>
<!-- fit page -->
<svg class="abs" style="left:497.500px;top:8.500px" width="15" height="18.500" viewBox="0 0 18 22">
 <rect x=".5" y=".5" width="17" height="21" fill="#f0f6fc" stroke="#4b88c8"/>
 <path d="M9 3 v5 M9 3 l-2 2 M9 3 l2 2 M9 19 v-5 M9 19 l-2 -2 M9 19 l2 -2 M2.500 11 h4.500 M2.500 11 l2 -2 M2.500 11 l2 2 M15.500 11 h-4.500 M15.500 11 l-2 -2 M15.500 11 l-2 2" stroke="#3b80c8" stroke-width="1.100" fill="none"/>
</svg>
<div class="grip" style="left:527px"></div>
<div class="tbox" style="left:534px;width:117px;padding-left:4px;color:#858585;line-height:21.5px"><span style="display:inline-block;transform:scaleX(.95);transform-origin:0 0">Εύρεση</span></div>
<div class="tarrow" style="left:652px"></div>
</div>
  <div id="nav"><div class="abs" style="left:237px;top:0;width:9px;height:593px;background:#373737"></div>
<div class="abs" style="left:239px;top:272px;width:3px;height:46px;background:repeating-linear-gradient(#555 0 1px,transparent 1px 2px)"></div>
<div class="abs" style="left:42px;top:4px;width:196px;height:589px;background:#262626;border:1px solid #505050;border-bottom:none"></div>
<div class="abs" style="left:42px;top:4px;width:196px;height:43px;background:linear-gradient(#3c3c3c,#2c2c2c 45%,#232323);border:1px solid #565656;border-bottom:1px solid #111"></div>
<div class="abs" style="left:43px;top:47px;width:194px;height:1px;background:#4c4c4c"></div>
<div class="abs" style="left:2px;top:47px;width:42px;height:43px;background:#262626;border:1px solid #505050;border-right:none"></div>
<span class="t" style="left:49.0px;top:16.2px;font-size:13.4px;line-height:17px;font-family:'Liberation Serif',serif;font-weight:700;color:#fff;transform:scaleX(1.010);">Σελιδοδείκτες</span>
<div class="abs" style="left:219px;top:18px;width:13px;height:13px;border:1px solid #6a6a6a;background:#2a2a2a"></div>
<div class="abs" style="left:223px;top:21px;width:0;height:0;border-top:3.5px solid transparent;border-bottom:3.5px solid transparent;border-right:4px solid #fff"></div>
<svg class="abs" style="left:0;top:0" width="246" height="593" viewBox="121 93 246 593">
 <!-- pages icon -->
 <g>
  <path d="M135.500 106.500 h9 l3.500 3.500 v13.500 h-12.500z" fill="#8f8f8f" stroke="#a9a9a9" stroke-width="1"/>
  <path d="M131.500 111.500 h9 l3.500 3.500 v13.500 h-12.500z" fill="#9a9a9a" stroke="#bdbdbd" stroke-width="1"/>
  <path d="M134 119.500 h7.500 M134 121.500 h7.500 M134 123.500 h7.500 M134 125.500 h7.500" stroke="#777" stroke-width="1"/>
 </g>
 <!-- bookmark tab icon -->
 <g>
  <path d="M136.500 150.500 h8 l4 4 v14 h-12z" fill="#cfe3f5" stroke="#7fb2e0" stroke-width="1"/>
  <path d="M131.500 154.500 h9.500 l4 4 v14 h-13.500z" fill="#f4f9fd" stroke="#8dbde6" stroke-width="1"/>
  <path d="M133.500 151 h6 v14 l-3 -3 l-3 3z" fill="#2f7fca" stroke="#1d5fa3" stroke-width=".8"/>
  <path d="M141 162.500 h3 M141 164.500 h3 M134 167.500 h10 M134 169.500 h10" stroke="#a9c8e4" stroke-width="1"/>
 </g>
 <!-- gear -->
 <g transform="translate(178.700,155.200) scale(.8)">
  <path d="M-1.600 -8 h3.200 l.5 2.200 l1.900 .8 l1.900 -1.200 l2.300 2.300 l-1.200 1.900 l.8 1.900 l2.200 .5 v3.200 l-2.200 .5 l-.8 1.900 l1.200 1.900 l-2.300 2.300 l-1.900 -1.200 l-1.900 .8 l-.5 2.200 h-3.200 l-.5 -2.200 l-1.900 -.8 l-1.900 1.200 l-2.300 -2.300 l1.200 -1.900 l-.8 -1.900 l-2.200 -.5 v-3.200 l2.200 -.5 l.8 -1.900 l-1.200 -1.900 l2.300 -2.300 l1.900 1.200 l1.900 -.8z" fill="#9d9d9d" stroke="#6a6a6a" stroke-width=".6"/>
  <circle r="2.600" fill="#2a2a2a"/>
 </g>
 <path d="M189.500 152.500 h6 l-3 3.200z" fill="#fff"/>
 <!-- new bookmark -->
 <g>
  <path d="M328.500 148.500 h11 v14 h-11z" fill="#f4f9fd" stroke="#6aa5dc" stroke-width="1"/>
  <path d="M329.500 147 h4.500 v9 l-2.250 -2.200 l-2.250 2.200z" fill="#2f7fca"/>
  <path d="M335.500 152.500 h3 M335.500 154.500 h3 M330.500 157.500 h8 M330.500 159.500 h8" stroke="#a9c8e4" stroke-width="1"/>
  <path d="M341 153.500 h3 v-2.500 l4 4 l-4 4 v-2.500 h-3z" fill="#3f8fd8"/>
 </g>
 <!-- comments -->
 <g>
  <path d="M131 612 h11 q2.500 0 2.500 2.500 v5 q0 2.500 -2.500 2.500 h-5 l-3 4 v-4 h-3 q-2.500 0 -2.500 -2.500 v-5 q0 -2.500 2.500 -2.500z" fill="#d7a332" stroke="#a87818" stroke-width=".8"/>
  <path d="M140 616 h10 q2.500 0 2.500 2.500 v5 q0 2.500 -2.500 2.500 h-5 l-3.500 4 v-4 h-1.500 q-2.500 0 -2.500 -2.500 v-5 q0 -2.500 2.500 -2.500z" fill="#e4b341" stroke="#a87818" stroke-width=".8"/>
  <path d="M141 620.500 h8 M141 622.500 h8 M132 616.500 h5" stroke="#9a6e12" stroke-width="1"/>
 </g>
 <!-- paperclip -->
 <path transform="translate(140,662) scale(.9) translate(-140,-663)" d="M146.500 657 l-9.500 9.500 q-2 2 -.3 3.700 q1.700 1.700 3.700 -.3 l10 -10 q3 -3 .2 -5.800 q-2.800 -2.800 -5.800 .2 l-11.500 11.500 q-3.800 3.800 -.4 7.200 q3.400 3.400 7.200 -.4 l8.500 -8.500" fill="none" stroke="#a8a8a8" stroke-width="1.700" stroke-linecap="round"/>
</svg>

<div id="bmlist" class="abs" style="left:46px;top:76px;width:187px;height:512px;background:#f5f5f5;overflow:hidden">
<svg class="abs" style="left:0;top:0" width="187" height="512" viewBox="167 169 187 512">
<path d="M211.500 169 V408 M195.500 169 V446" stroke="#bdbdbd" stroke-width="1" fill="none"/>
<path d="M211 180.5 H220" stroke="#bdbdbd"/>
<rect x="206.5" y="176.0" width="9" height="9" fill="#fff" stroke="#8e8e8e"/><path d="M208.5 180.5 h5 M211 178.0 v5" stroke="#000" stroke-width="1"/>
<rect x="220.5" y="173.5" width="11" height="14" fill="#f4f9fd" stroke="#3a86cc"/><path d="M222 172 h3 v9 l-1.500 -1.500 l-1.500 1.500z" fill="#1f66b0"/><path d="M226 176.5 h4 M226 178.5 h4 M226 180.5 h4 M222 182.5 h8 M222 184.5 h8" stroke="#9cc0e0" stroke-width="1"/>
<path d="M211 218.5 H220" stroke="#bdbdbd"/>
<rect x="220.5" y="211.5" width="11" height="14" fill="#f4f9fd" stroke="#3a86cc"/><path d="M222 210 h3 v9 l-1.500 -1.500 l-1.500 1.500z" fill="#1f66b0"/><path d="M226 214.5 h4 M226 216.5 h4 M226 218.5 h4 M222 220.5 h8 M222 222.5 h8" stroke="#9cc0e0" stroke-width="1"/>
<path d="M211 256.5 H220" stroke="#bdbdbd"/>
<rect x="220.5" y="249.5" width="11" height="14" fill="#f4f9fd" stroke="#3a86cc"/><path d="M222 248 h3 v9 l-1.500 -1.500 l-1.500 1.500z" fill="#1f66b0"/><path d="M226 252.5 h4 M226 254.5 h4 M226 256.5 h4 M222 258.5 h8 M222 260.5 h8" stroke="#9cc0e0" stroke-width="1"/>
<path d="M211 310.5 H220" stroke="#bdbdbd"/>
<rect x="239" y="302.5" width="98" height="33.5" fill="#e1e1e1"/>
<rect x="220.5" y="303.5" width="11" height="14" fill="#a9a9a9" stroke="#7e7e7e"/><path d="M222 302 h3 v9 l-1.500 -1.500 l-1.500 1.500z" fill="#6a6a6a"/><path d="M226 306.5 h4 M226 308.5 h4 M226 310.5 h4 M222 312.5 h8 M222 314.5 h8" stroke="#cfcfcf" stroke-width="1"/>
<path d="M211 348.5 H220" stroke="#bdbdbd"/>
<rect x="220.5" y="341.5" width="11" height="14" fill="#f4f9fd" stroke="#3a86cc"/><path d="M222 340 h3 v9 l-1.500 -1.500 l-1.500 1.500z" fill="#1f66b0"/><path d="M226 344.5 h4 M226 346.5 h4 M226 348.5 h4 M222 350.5 h8 M222 352.5 h8" stroke="#9cc0e0" stroke-width="1"/>
<path d="M211 370.5 H220" stroke="#bdbdbd"/>
<rect x="220.5" y="363.5" width="11" height="14" fill="#f4f9fd" stroke="#3a86cc"/><path d="M222 362 h3 v9 l-1.500 -1.500 l-1.500 1.500z" fill="#1f66b0"/><path d="M226 366.5 h4 M226 368.5 h4 M226 370.5 h4 M222 372.5 h8 M222 374.5 h8" stroke="#9cc0e0" stroke-width="1"/>
<path d="M211 408.5 H220" stroke="#bdbdbd"/>
<rect x="220.5" y="401.5" width="11" height="14" fill="#f4f9fd" stroke="#3a86cc"/><path d="M222 400 h3 v9 l-1.500 -1.500 l-1.500 1.500z" fill="#1f66b0"/><path d="M226 404.5 h4 M226 406.5 h4 M226 408.5 h4 M222 410.5 h8 M222 412.5 h8" stroke="#9cc0e0" stroke-width="1"/>
<path d="M195 446.5 H204" stroke="#bdbdbd"/>
<rect x="204.5" y="439.5" width="11" height="14" fill="#f4f9fd" stroke="#3a86cc"/><path d="M206 438 h3 v9 l-1.500 -1.500 l-1.500 1.500z" fill="#1f66b0"/><path d="M210 442.5 h4 M210 444.5 h4 M210 446.5 h4 M206 448.5 h8 M206 450.5 h8" stroke="#9cc0e0" stroke-width="1"/>
<path d="M183 468.5 H188" stroke="#bdbdbd"/>
<rect x="174.5" y="464.0" width="9" height="9" fill="#fff" stroke="#8e8e8e"/><path d="M176.5 468.5 h5 M179 466.0 v5" stroke="#000" stroke-width="1"/>
<rect x="188.5" y="461.5" width="11" height="14" fill="#f4f9fd" stroke="#3a86cc"/><path d="M190 460 h3 v9 l-1.500 -1.500 l-1.500 1.500z" fill="#1f66b0"/><path d="M194 464.5 h4 M194 466.5 h4 M194 468.5 h4 M190 470.5 h8 M190 472.5 h8" stroke="#9cc0e0" stroke-width="1"/>
<path d="M183 522.5 H188" stroke="#bdbdbd"/>
<rect x="174.5" y="518.0" width="9" height="9" fill="#fff" stroke="#8e8e8e"/><path d="M176.5 522.5 h5 M179 520.0 v5" stroke="#000" stroke-width="1"/>
<rect x="188.5" y="515.5" width="11" height="14" fill="#f4f9fd" stroke="#3a86cc"/><path d="M190 514 h3 v9 l-1.500 -1.500 l-1.500 1.500z" fill="#1f66b0"/><path d="M194 518.5 h4 M194 520.5 h4 M194 522.5 h4 M190 524.5 h8 M190 526.5 h8" stroke="#9cc0e0" stroke-width="1"/>
<path d="M183 560.5 H188" stroke="#bdbdbd"/>
<rect x="174.5" y="556.0" width="9" height="9" fill="#fff" stroke="#8e8e8e"/><path d="M176.5 560.5 h5 M179 558.0 v5" stroke="#000" stroke-width="1"/>
<rect x="188.5" y="553.5" width="11" height="14" fill="#f4f9fd" stroke="#3a86cc"/><path d="M190 552 h3 v9 l-1.500 -1.500 l-1.500 1.500z" fill="#1f66b0"/><path d="M194 556.5 h4 M194 558.5 h4 M194 560.5 h4 M190 562.5 h8 M190 564.5 h8" stroke="#9cc0e0" stroke-width="1"/>
<path d="M183 582.5 H188" stroke="#bdbdbd"/>
<rect x="174.5" y="578.0" width="9" height="9" fill="#fff" stroke="#8e8e8e"/><path d="M176.5 582.5 h5 M179 580.0 v5" stroke="#000" stroke-width="1"/>
<rect x="188.5" y="575.5" width="11" height="14" fill="#f4f9fd" stroke="#3a86cc"/><path d="M190 574 h3 v9 l-1.500 -1.500 l-1.500 1.500z" fill="#1f66b0"/><path d="M194 578.5 h4 M194 580.5 h4 M194 582.5 h4 M190 584.5 h8 M190 586.5 h8" stroke="#9cc0e0" stroke-width="1"/>
<path d="M183 604.5 H188" stroke="#bdbdbd"/>
<rect x="174.5" y="600.0" width="9" height="9" fill="#fff" stroke="#8e8e8e"/><path d="M176.5 604.5 h5 M179 602.0 v5" stroke="#000" stroke-width="1"/>
<rect x="188.5" y="597.5" width="11" height="14" fill="#f4f9fd" stroke="#3a86cc"/><path d="M190 596 h3 v9 l-1.500 -1.500 l-1.500 1.500z" fill="#1f66b0"/><path d="M194 600.5 h4 M194 602.5 h4 M194 604.5 h4 M190 606.5 h8 M190 608.5 h8" stroke="#9cc0e0" stroke-width="1"/>
<path d="M183 626.5 H188" stroke="#bdbdbd"/>
<rect x="174.5" y="622.0" width="9" height="9" fill="#fff" stroke="#8e8e8e"/><path d="M176.5 626.5 h5 M179 624.0 v5" stroke="#000" stroke-width="1"/>
<rect x="188.5" y="619.5" width="11" height="14" fill="#f4f9fd" stroke="#3a86cc"/><path d="M190 618 h3 v9 l-1.500 -1.500 l-1.500 1.500z" fill="#1f66b0"/><path d="M194 622.5 h4 M194 624.5 h4 M194 626.5 h4 M190 628.5 h8 M190 630.5 h8" stroke="#9cc0e0" stroke-width="1"/>
<rect x="188.5" y="673.5" width="11" height="14" fill="#f4f9fd" stroke="#3a86cc"/><path d="M190 672 h3 v9 l-1.500 -1.500 l-1.500 1.500z" fill="#1f66b0"/><path d="M194 676.5 h4 M194 678.5 h4 M194 680.5 h4 M190 682.5 h8 M190 684.5 h8" stroke="#9cc0e0" stroke-width="1"/>
</svg>
<span class="t" style="left:73.3px;top:4.5px;font-size:13px;line-height:16px;transform:scaleX(0.959);-webkit-text-stroke:.22px #000;">Στοιχεία πάνω</span>
<span class="t" style="left:73.3px;top:20.5px;font-size:13px;line-height:16px;transform:scaleX(0.982);-webkit-text-stroke:.22px #000;">πλευράς</span>
<span class="t" style="left:73.3px;top:42.5px;font-size:13px;line-height:16px;transform:scaleX(1.004);-webkit-text-stroke:.22px #000;">Στοιχεία δεξιάς</span>
<span class="t" style="left:73.3px;top:58.5px;font-size:13px;line-height:16px;transform:scaleX(0.982);-webkit-text-stroke:.22px #000;">πλευράς</span>
<span class="t" style="left:73.3px;top:80.5px;font-size:13px;line-height:16px;transform:scaleX(0.982);-webkit-text-stroke:.22px #000;">Στοιχεία</span>
<span class="t" style="left:73.3px;top:96.5px;font-size:13px;line-height:16px;transform:scaleX(0.982);-webkit-text-stroke:.22px #000;">αριστερής</span>
<span class="t" style="left:73.3px;top:112.5px;font-size:13px;line-height:16px;transform:scaleX(0.982);-webkit-text-stroke:.22px #000;">πλευράς</span>
<span class="t" style="left:73.3px;top:134.5px;font-size:13px;line-height:16px;transform:scaleX(0.982);-webkit-text-stroke:.22px #000;">Στοιχεία κάτω</span>
<span class="t" style="left:73.3px;top:150.5px;font-size:13px;line-height:16px;transform:scaleX(0.982);-webkit-text-stroke:.22px #000;">πλευράς</span>
<span class="t" style="left:73.3px;top:172.5px;font-size:13px;line-height:16px;transform:scaleX(0.982);-webkit-text-stroke:.22px #000;">Στοιχεία οθόνης</span>
<span class="t" style="left:73.3px;top:194.5px;font-size:13px;line-height:16px;transform:scaleX(0.982);-webkit-text-stroke:.22px #000;">Ασύρματες</span>
<span class="t" style="left:73.3px;top:210.5px;font-size:13px;line-height:16px;transform:scaleX(0.982);-webkit-text-stroke:.22px #000;">κεραίες</span>
<span class="t" style="left:73.3px;top:232.5px;font-size:13px;line-height:16px;transform:scaleX(0.982);-webkit-text-stroke:.22px #000;">Πρόσθετα</span>
<span class="t" style="left:73.3px;top:248.5px;font-size:13px;line-height:16px;transform:scaleX(0.982);-webkit-text-stroke:.22px #000;">στοιχεία υλικού</span>
<span class="t" style="left:57.3px;top:270.5px;font-size:13px;line-height:16px;transform:scaleX(0.982);-webkit-text-stroke:.22px #000;">Ετικέτες</span>
<span class="t" style="left:41.3px;top:292.5px;font-size:13px;line-height:16px;transform:scaleX(0.982);-webkit-text-stroke:.22px #000;">Ασύρματη λειτουργία,</span>
<span class="t" style="left:41.3px;top:308.5px;font-size:13px;line-height:16px;transform:scaleX(0.982);-webkit-text-stroke:.22px #000;">τοπικό δίκτυο και</span>
<span class="t" style="left:41.3px;top:324.5px;font-size:13px;line-height:16px;transform:scaleX(0.982);-webkit-text-stroke:.22px #000;">μόντεμ</span>
<span class="t" style="left:41.3px;top:346.5px;font-size:13px;line-height:16px;transform:scaleX(0.982);-webkit-text-stroke:.22px #000;">Συσκευές κατάδειξης</span>
<span class="t" style="left:41.3px;top:362.5px;font-size:13px;line-height:16px;transform:scaleX(0.982);-webkit-text-stroke:.22px #000;">και πληκτρολόγιο</span>
<span class="t" style="left:41.3px;top:384.5px;font-size:13px;line-height:16px;transform:scaleX(0.982);-webkit-text-stroke:.22px #000;">Πολυμέσα</span>
<span class="t" style="left:41.3px;top:406.5px;font-size:13px;line-height:16px;transform:scaleX(0.982);-webkit-text-stroke:.22px #000;">Διαχείριση ενέργειας</span>
<span class="t" style="left:41.3px;top:428.5px;font-size:13px;line-height:16px;transform:scaleX(0.982);-webkit-text-stroke:.22px #000;">Μονάδες δίσκου</span>
<span class="t" style="left:41.3px;top:450.5px;font-size:13px;line-height:16px;transform:scaleX(0.982);-webkit-text-stroke:.22px #000;">Εξωτερικές συσκευές</span>
<span class="t" style="left:41.3px;top:466.5px;font-size:13px;line-height:16px;transform:scaleX(0.982);-webkit-text-stroke:.22px #000;">και κάρτες εξωτερικών</span>
<span class="t" style="left:41.3px;top:482.5px;font-size:13px;line-height:16px;transform:scaleX(0.982);-webkit-text-stroke:.22px #000;">μέσων</span>
<span class="t" style="left:41.3px;top:504.5px;font-size:13px;line-height:16px;transform:scaleX(0.982);-webkit-text-stroke:.22px #000;">Προσθήκη ή</span>
<span class="t" style="left:41.3px;top:520.5px;font-size:13px;line-height:16px;transform:scaleX(0.982);-webkit-text-stroke:.22px #000;">αφαίρεση μονάδων</span>
<div class="abs" style="left:171px;top:0;width:16px;height:512px;background:#f1f1f1;border-left:1px solid #e4e4e4"></div>
<div class="abs" style="left:172px;top:53px;width:14px;height:287px;border:1px solid #979797;border-radius:2px;background:linear-gradient(90deg,#f6f6f6 0,#e9e9e9 45%,#d4d4d4 55%,#c9c9c9 100%)"></div>
<div class="abs" style="left:175px;top:193px;width:8px;height:7px;background:repeating-linear-gradient(#7a7a7a 0 1px,#f4f4f4 1px 2px,transparent 2px 3px)"></div>
<svg class="abs" style="left:175px;top:7px" width="8" height="5" viewBox="0 0 8 5"><path d="M0 4.500 L4 .5 L8 4.500Z" fill="#333"/></svg>
<svg class="abs" style="left:175px;top:501px" width="8" height="5" viewBox="0 0 8 5"><path d="M0 .5 L4 4.500 L8 .5Z" fill="#333"/></svg>
</div></div>
  <div id="doc"><div class="abs" style="left:0;top:0;width:812px;height:5px;background:linear-gradient(#8c8c8c 0,#b8b8b8 20%,#e4e4e4 55%,#fff 100%)"></div>
<div class="abs" style="left:790px;top:0;width:5px;height:593px;background:#333"></div>
<span class="t" style="left:72.0px;top:-1.3px;font-size:19.6px;line-height:24px;font-weight:700;color:#0f62fe;transform:scaleX(0.963);">Στοιχεία κάτω πλευράς</span>
<svg class="abs" style="left:0;top:0" width="812" height="593" viewBox="367 93 812 593" font-family="Liberation Sans, sans-serif">
<defs>
<linearGradient id="lb" x1="0" y1="0" x2="0" y2="1"><stop offset="0" stop-color="#858585"/><stop offset=".5" stop-color="#8e8e8e"/><stop offset="1" stop-color="#888"/></linearGradient>
<linearGradient id="pd" x1="0" y1="0" x2="0" y2="1"><stop offset="0" stop-color="#454545"/><stop offset="1" stop-color="#565656"/></linearGradient>
<pattern id="vv" width="2.2" height="4" patternUnits="userSpaceOnUse"><rect width="2.2" height="4" fill="#1c1c1c"/><rect x="1.400" width=".8" height="4" fill="#4a4a4a"/></pattern>
<pattern id="vh" width="4" height="2.2" patternUnits="userSpaceOnUse"><rect width="4" height="2.2" fill="#1c1c1c"/><rect y="1.400" width="4" height=".8" fill="#4a4a4a"/></pattern>
<filter id="sb" x="-10%" y="-10%" width="120%" height="120%"><feGaussianBlur stdDeviation=".6"/></filter>
</defs>
<g filter="url(#sb)">
<rect x="511" y="211.500" width="380" height="250" rx="9" fill="url(#lb)" stroke="#a8a8a8" stroke-width="1"/>
<rect x="536" y="211" width="29" height="3" fill="#f4f4f4"/><rect x="838" y="211" width="29" height="3" fill="#f4f4f4"/>
<path d="M512 300 v130" stroke="#9a9a9a" stroke-width="2"/><path d="M890 300 v130" stroke="#7a7a7a" stroke-width="1.500"/>
<circle cx="540" cy="238" r="8" fill="#989898"/>
<circle cx="541" cy="437" r="8" fill="#989898"/>
<circle cx="861" cy="238" r="8" fill="#989898"/>
<circle cx="861" cy="437" r="8" fill="#989898"/>
<circle cx="523" cy="230" r="2.2" fill="#5c5c5c"/>
<circle cx="572" cy="285" r="2.6" fill="#5c5c5c"/>
<circle cx="588" cy="285" r="2.6" fill="#5c5c5c"/>
<circle cx="521" cy="448" r="2" fill="#5c5c5c"/>
<circle cx="583" cy="432" r="2.2" fill="#5c5c5c"/>
<circle cx="879" cy="448" r="2" fill="#5c5c5c"/>
<circle cx="724" cy="414" r="1.5" fill="#5c5c5c"/>
<circle cx="863" cy="414" r="1.5" fill="#5c5c5c"/>
<circle cx="863" cy="333" r="1.8" fill="#5c5c5c"/>
</g>
<path d="M585 212.500 H793 V266 H585Z" fill="url(#pd)" stroke="#161616" stroke-width="3.600" stroke-linejoin="miter"/><path d="M585 212.500 H793 V266 H585Z" fill="none" stroke="#fff" stroke-width="1.600"/>
<path d="M585 267.500 H742.500 V348 H660 V319 H585Z" fill="url(#pd)" stroke="#161616" stroke-width="3.600" stroke-linejoin="miter"/><path d="M585 267.500 H742.500 V348 H660 V319 H585Z" fill="none" stroke="#fff" stroke-width="1.600"/>
<circle cx="588.500" cy="285" r="2.600" fill="#2c2c2c"/>
<path d="M660 349.500 H845 V441 H660Z" fill="url(#pd)" stroke="#161616" stroke-width="3.600" stroke-linejoin="miter"/><path d="M660 349.500 H845 V441 H660Z" fill="none" stroke="#fff" stroke-width="1.600"/>
<rect x="674.5" y="276" width="39.5" height="65" fill="#2a2a2a" stroke="#111" stroke-width="3"/><rect x="674.5" y="276" width="39.5" height="65" fill="none" stroke="#fff" stroke-width="1.100"/><rect x="677.0" y="278.5" width="34.5" height="60" fill="url(#vv)" stroke="#fff" stroke-width=".8"/>
<path d="M677 287 h34.500" stroke="#555" stroke-width="1.400"/>
<path d="M677 298 h34.500" stroke="#555" stroke-width="1.400"/>
<path d="M677 309 h34.500" stroke="#555" stroke-width="1.400"/>
<path d="M677 320 h34.500" stroke="#555" stroke-width="1.400"/>
<path d="M677 331 h34.500" stroke="#555" stroke-width="1.400"/>
<rect x="747.500" y="276.500" width="47" height="13.500" fill="#3a3a3a" stroke="#111" stroke-width="3"/><rect x="747.500" y="276.500" width="47" height="13.500" fill="none" stroke="#fff" stroke-width="1.100"/><rect x="750" y="279" width="42" height="8.500" fill="#2b2b2b" stroke="#9a9a9a" stroke-width=".7"/><rect x="751" y="280" width="10" height="6.500" fill="#555"/>
<rect x="803" y="231.5" width="45.5" height="43.5" fill="#2a2a2a" stroke="#111" stroke-width="3"/><rect x="803" y="231.5" width="45.5" height="43.5" fill="none" stroke="#fff" stroke-width="1.100"/><rect x="805.5" y="234.0" width="40.5" height="38.5" fill="url(#vv)" stroke="#fff" stroke-width=".8"/>
<path d="M806 243 h40" stroke="#555" stroke-width="1.300"/>
<path d="M806 253 h40" stroke="#555" stroke-width="1.300"/>
<path d="M806 263 h40" stroke="#555" stroke-width="1.300"/>
<rect x="805" y="225" width="57" height="76" fill="#3f6f93" opacity=".62"/>
<rect x="807.500" y="233.500" width="38" height="39" fill="none" stroke="#8fc4ea" stroke-width="1" opacity=".9"/>
<rect x="872.5" y="233.5" width="17" height="61" fill="#2a2a2a" stroke="#111" stroke-width="3"/><rect x="872.5" y="233.5" width="17" height="61" fill="none" stroke="#fff" stroke-width="1.100"/><rect x="875.0" y="236.0" width="12" height="56" fill="url(#vh)" stroke="#fff" stroke-width=".8"/>
<rect x="671" y="378" width="89" height="28" fill="#2a2a2a" stroke="#111" stroke-width="3"/><rect x="671" y="378" width="89" height="28" fill="none" stroke="#fff" stroke-width="1.100"/><rect x="673.5" y="380.5" width="84" height="23" fill="url(#vv)" stroke="#fff" stroke-width=".8"/>
<path d="M674 392 h83" stroke="#555" stroke-width="1.400"/>
<rect x="798.5" y="377.5" width="38.5" height="28" fill="#2a2a2a" stroke="#111" stroke-width="3"/><rect x="798.5" y="377.5" width="38.5" height="28" fill="none" stroke="#fff" stroke-width="1.100"/><rect x="801.0" y="380.0" width="33.5" height="23" fill="url(#vv)" stroke="#fff" stroke-width=".8"/>
<path d="M801 391.500 h33" stroke="#555" stroke-width="1.400"/>
<path d="M676.500 184 V211" stroke="#fff" stroke-width="3.400" fill="none"/><path d="M676.500 184 V211" stroke="#0a0a0a" stroke-width="1.500" fill="none"/>
<path d="M696.500 184 V276" stroke="#fff" stroke-width="3.400" fill="none"/><path d="M696.500 184 V276" stroke="#0a0a0a" stroke-width="1.500" fill="none"/>
<path d="M771.500 184 V276" stroke="#fff" stroke-width="3.400" fill="none"/><path d="M771.500 184 V276" stroke="#0a0a0a" stroke-width="1.500" fill="none"/>
<path d="M828.500 184 V232" stroke="#fff" stroke-width="3.400" fill="none"/><path d="M828.500 184 V232" stroke="#0a0a0a" stroke-width="1.500" fill="none"/>
<path d="M832 181 L880 234" stroke="#fff" stroke-width="3.400" fill="none"/><path d="M832 181 L880 234" stroke="#0a0a0a" stroke-width="1.500" fill="none"/>
<path d="M623.500 476 V319" stroke="#fff" stroke-width="3.400" fill="none"/><path d="M623.500 476 V319" stroke="#0a0a0a" stroke-width="1.500" fill="none"/>
<path d="M691.500 476 V406" stroke="#fff" stroke-width="3.400" fill="none"/><path d="M691.500 476 V406" stroke="#0a0a0a" stroke-width="1.500" fill="none"/>
<path d="M755.500 476 V442" stroke="#fff" stroke-width="3.400" fill="none"/><path d="M755.500 476 V442" stroke="#0a0a0a" stroke-width="1.500" fill="none"/>
<path d="M817.500 476 V406" stroke="#fff" stroke-width="3.400" fill="none"/><path d="M817.500 476 V406" stroke="#0a0a0a" stroke-width="1.500" fill="none"/>
<circle cx="676" cy="175.5" r="9.200" fill="#0a0a0a"/><text x="676" y="179.6" font-size="11.500" font-weight="700" fill="#fff" text-anchor="middle">1</text>
<circle cx="696" cy="175.5" r="9.200" fill="#0a0a0a"/><text x="696" y="179.6" font-size="11.500" font-weight="700" fill="#fff" text-anchor="middle">2</text>
<circle cx="771" cy="175.5" r="9.200" fill="#0a0a0a"/><text x="771" y="179.6" font-size="11.500" font-weight="700" fill="#fff" text-anchor="middle">3</text>
<circle cx="828" cy="175.5" r="9.200" fill="#0a0a0a"/><text x="828" y="179.6" font-size="11.500" font-weight="700" fill="#fff" text-anchor="middle">2</text>
<circle cx="623.5" cy="484.5" r="9.200" fill="#0a0a0a"/><text x="623.5" y="488.6" font-size="11.500" font-weight="700" fill="#fff" text-anchor="middle">4</text>
<circle cx="691.5" cy="485" r="9.200" fill="#0a0a0a"/><text x="691.5" y="489.1" font-size="11.500" font-weight="700" fill="#fff" text-anchor="middle">2</text>
<circle cx="755" cy="485" r="9.200" fill="#0a0a0a"/><text x="755" y="489.1" font-size="11.500" font-weight="700" fill="#fff" text-anchor="middle">5</text>
<circle cx="817.5" cy="485" r="9.200" fill="#0a0a0a"/><text x="817.5" y="489.1" font-size="11.500" font-weight="700" fill="#fff" text-anchor="middle">2</text>
<circle cx="769" cy="145" r="15" fill="#fff" stroke="#0a0a0a" stroke-width="2.400"/><rect x="758.500" y="139" width="20.500" height="12" rx="1.500" fill="#0a0a0a"/><rect x="756.500" y="142" width="3" height="6" fill="#0a0a0a"/><path d="M762 141.500 h3 l-1 7 h-3z" fill="#fff"/>
<circle cx="623" cy="517" r="15" fill="#fff" stroke="#0a0a0a" stroke-width="2.400"/><rect x="612" y="509" width="22" height="13.500" rx="1" fill="#0a0a0a"/><rect x="614.500" y="511.500" width="7.500" height="7.500" fill="#fff"/><rect x="624" y="511.500" width="7.500" height="7.500" fill="#fff"/><path d="M614 524.500 v-2 M617 524.500 v-2 M620 524.500 v-2 M623 524.500 v-2 M626 524.500 v-2 M629 524.500 v-2 M632 524.500 v-2" stroke="#0a0a0a" stroke-width="1.300"/>
<circle cx="755" cy="517" r="15" fill="#fff" stroke="#0a0a0a" stroke-width="2.400"/>
<ellipse cx="755" cy="510" rx="10.500" ry="4" fill="#0a0a0a" stroke="#fff" stroke-width="1"/>
<ellipse cx="755" cy="517" rx="10.500" ry="4" fill="#0a0a0a" stroke="#fff" stroke-width="1"/>
<ellipse cx="755" cy="524" rx="10.500" ry="4" fill="#0a0a0a" stroke="#fff" stroke-width="1"/>
<ellipse cx="755" cy="509" rx="4" ry="1.300" fill="#fff"/><path d="M751 516 q4 3 8 0" stroke="#fff" stroke-width="1.200" fill="none"/><path d="M751 523 q4 3 8 0" stroke="#fff" stroke-width="1.200" fill="none"/>
</svg>
<div class="abs" style="left:132px;top:457px;width:599px;height:5px;background:#0f62fe"></div>
<div class="abs" style="left:132px;top:485px;width:599px;height:4px;background:#0f62fe"></div>
<div class="abs" style="left:132px;top:512px;width:599px;height:1px;background:#2f7bff"></div>
<span class="t" style="left:138.4px;top:466.8px;font-size:10.6px;line-height:13px;font-weight:700;color:#0f62fe;transform:scaleX(1.013);">Στοιχείο</span>
<span class="t" style="left:418.0px;top:466.8px;font-size:10.6px;line-height:13px;font-weight:700;color:#0f62fe;transform:scaleX(0.984);">Περιγραφή</span>
<span class="t" style="left:138.4px;top:494.0px;font-size:10.6px;line-height:13px;font-weight:700;transform:scaleX(0.973);-webkit-text-stroke:.12px #000;">(1)</span>
<span class="t" style="left:177.7px;top:494.0px;font-size:10.6px;line-height:13px;transform:scaleX(1.013);-webkit-text-stroke:.12px #000;">Θέση μπαταρίας</span>
<span class="t" style="left:418.0px;top:494.0px;font-size:10.6px;line-height:13px;transform:scaleX(1.006);-webkit-text-stroke:.12px #000;">Χρησιμοποιείται για την τοποθέτηση της μπαταρίας.</span>
<span class="t" style="left:138.4px;top:518.8px;font-size:10.6px;line-height:13px;font-weight:700;transform:scaleX(0.973);-webkit-text-stroke:.12px #000;">(2)</span>
<span class="t" style="left:177.7px;top:518.8px;font-size:10.6px;line-height:13px;transform:scaleX(1.013);-webkit-text-stroke:.12px #000;">Αεραγωγοί (4)</span>
<span class="t" style="left:418.0px;top:518.8px;font-size:10.6px;line-height:13px;transform:scaleX(0.980);-webkit-text-stroke:.12px #000;">Επιτρέπει τη ροή αέρα για την ψύξη των εσωτερικών εξαρτημάτων.</span>
<span class="t" style="left:418.0px;top:543.3px;font-size:10.6px;line-height:13px;font-weight:700;color:#0f62fe;transform:scaleX(0.985);">ΣΗΜΕΙΩΣΗ</span>
<span class="t" style="left:483.5px;top:543.3px;font-size:10.6px;line-height:13px;transform:scaleX(1.008);-webkit-text-stroke:.12px #000;">Ο ανεμιστήρας του υπολογιστή εκκινείται αυτόματα</span>
<span class="t" style="left:418.0px;top:556.5px;font-size:10.6px;line-height:13px;transform:scaleX(1.008);-webkit-text-stroke:.12px #000;">για την ψύξη των εσωτερικών εξαρτημάτων και την πρόληψη της</span>
<span class="t" style="left:418.0px;top:569.6px;font-size:10.6px;line-height:13px;transform:scaleX(1.005);-webkit-text-stroke:.12px #000;">υπερθέρμανσης. Η ενεργοποίηση/απενεργοποίηση του</span>
<span class="t" style="left:418.0px;top:582.8px;font-size:10.6px;line-height:13px;transform:scaleX(0.984);-webkit-text-stroke:.12px #000;">εσωτερικού ανεμιστήρα κατά τη διάρκεια της κανονικής λειτουργίας</span>
<div class="abs" style="left:795px;top:0;width:17px;height:593px;background:#f0f0f0;border-left:1px solid #e2e2e2"></div>
<div class="abs" style="left:796px;top:88px;width:15px;height:16px;border:1px solid #979797;border-radius:2px;background:linear-gradient(90deg,#f6f6f6 0,#e9e9e9 45%,#d4d4d4 55%,#cfcfcf 100%)"></div>
<svg class="abs" style="left:800px;top:7px" width="8" height="5" viewBox="0 0 8 5"><path d="M0 4.500 L4 .5 L8 4.500Z" fill="#333"/></svg>
<svg class="abs" style="left:800px;top:581px" width="8" height="5" viewBox="0 0 8 5"><path d="M0 .5 L4 4.500 L8 .5Z" fill="#333"/></svg></div>
 </div>
</div>

<div id="taskbar"><div class="abs" style="left:0;top:0;width:1366px;height:40px;background:linear-gradient(rgba(30,32,42,.86),rgba(14,15,22,.9) 50%,rgba(10,11,17,.93));box-shadow:inset 0 1px 0 rgba(255,255,255,.33),inset 0 2px 0 rgba(255,255,255,.08)"></div>
<div class="abs" style="left:0;top:1px;width:240px;height:39px;background:linear-gradient(147.600deg,rgba(150,172,112,.96) 0,rgba(176,200,140,.95) 38%,rgba(166,190,130,.95) 50%,rgba(120,96,60,.7) 54%,rgba(62,22,20,.75) 58%,rgba(40,10,10,.45) 72%,transparent 92%)"></div>
<!-- active buttons -->
<div class="abs" style="left:246px;top:1px;width:58px;height:38px;border-radius:3px;border:1px solid rgba(255,255,255,.42);background:linear-gradient(rgba(255,255,255,.3),rgba(255,255,255,.14) 48%,rgba(255,255,255,.04) 52%,rgba(255,255,255,.12));box-shadow:0 0 0 1px rgba(0,0,0,.6)"></div>
<div class="abs" style="left:308px;top:1px;width:58px;height:38px;border-radius:3px;border:1px solid rgba(255,255,255,.75);background:linear-gradient(rgba(255,255,255,.66),rgba(225,225,230,.52) 48%,rgba(180,180,190,.42) 52%,rgba(220,220,225,.55));box-shadow:0 0 0 1px rgba(0,0,0,.6)"></div>
<svg class="abs" style="left:0;top:0" width="1366" height="40" viewBox="0 728 1366 40" font-family="Liberation Sans, sans-serif">
<defs>
 <radialGradient id="orbG" cx=".5" cy=".25" r=".85"><stop offset="0" stop-color="#9ad4f8"/><stop offset=".45" stop-color="#2a78c8"/><stop offset=".8" stop-color="#0f3f88"/><stop offset="1" stop-color="#3aa0e0"/></radialGradient>
 <linearGradient id="adG" x1="0" y1="0" x2="0" y2="1"><stop offset="0" stop-color="#d81818"/><stop offset="1" stop-color="#980808"/></linearGradient>
 <linearGradient id="fdG" x1="0" y1="0" x2="0" y2="1"><stop offset="0" stop-color="#fcf0b8"/><stop offset="1" stop-color="#f0d478"/></linearGradient>
 <linearGradient id="ieG" x1="0" y1="0" x2="0" y2="1"><stop offset="0" stop-color="#5ac8f8"/><stop offset="1" stop-color="#1478d0"/></linearGradient>
</defs>
<!-- start orb -->
<circle cx="27.300" cy="747.500" r="18.500" fill="#0a2a5a" opacity=".6"/>
<circle cx="27.300" cy="747.300" r="17.500" fill="url(#orbG)" stroke="#b8dcf4" stroke-width="1" stroke-opacity=".7"/>
<g transform="translate(27.600,747.600) scale(1.280) translate(-25.600,-747.300)">
<path d="M17.500 741 q4 -2.500 8.500 -.8 l-1.600 6 q-4 -1.700 -8.500 .6z" fill="#f0582a"/>
<path d="M27.500 740.600 q4 1.800 8.500 -.4 l-1.600 6 q-4 2.200 -8.500 .4z" fill="#8ad020"/>
<path d="M15.500 748.400 q4 -2.500 8.500 -.8 l-1.600 6 q-4 -1.700 -8.500 .6z" fill="#3aa8f4"/>
<path d="M25.500 748 q4 1.800 8.500 -.4 l-1.600 6 q-4 2.200 -8.500 .4z" fill="#f8c020"/>
</g>
<!-- explorer -->
<g>
 <path d="M75 742 v-5.500 q0 -1.500 1.500 -1.500 h8 l2.500 2.500 h15 q1.500 0 1.500 1.500 v3z" fill="#f6e29a" stroke="#c9a94e" stroke-width=".8"/>
 <rect x="77.500" y="736" width="3" height="2" fill="#30b030"/><rect x="85.500" y="737.200" width="3" height="2" fill="#e03030"/><rect x="94" y="738.500" width="3.500" height="2" fill="#3080e0"/>
 <path d="M73.800 741.500 h30.700 v18.500 h-30.700z" fill="url(#fdG)" stroke="#c9a94e" stroke-width=".8"/>
 <path d="M76.500 762.500 v-12 q0 -2.500 2.500 -2.500 h21 q2.500 0 2.500 2.500 v12 h-6 v-8 h-14 v8z" fill="#9ad4f6" stroke="#3a92d0" stroke-width=".8"/>
 <path d="M79 753 l1.500 -7 l1.500 7 l-1.500 4z M75 751.500 l5.500 -1.200 l5.500 1.200 l-5.500 1.200z" fill="#fff" opacity=".95"/>
</g>
<!-- wmp -->
<g>
 <rect x="143" y="738" width="19" height="21" rx="1.500" fill="#8ab8e0" stroke="#5a88b8" stroke-width=".8"/>
 <rect x="140" y="737.500" width="19" height="22" rx="1.500" fill="#a8d0f0" stroke="#5a88b8" stroke-width=".8"/>
 <rect x="137.500" y="737" width="19" height="23" rx="1.500" fill="#c8e4f8" stroke="#5a90c0" stroke-width=".8"/>
 <circle cx="147" cy="748.500" r="8.300" fill="#f07818" stroke="#c05808" stroke-width=".8"/>
 <path d="M144 743.500 l8 5 l-8 5z" fill="#fff"/>
</g>
<!-- ie -->
<g>
 <text x="214.500" y="762" font-size="49" font-weight="700" fill="url(#ieG)" text-anchor="middle" stroke="#1468b8" stroke-width=".5">e</text>
 <path d="M228 734.500 q-3 -3 -10 -.5 q-10 4 -16 15 q-5 10 -2 13.500 q-5 -2 -.5 -13 q6 -13 17 -18 q8 -3.500 11.500 3z" fill="#f8cc28" stroke="#c89808" stroke-width=".5"/>
</g>
<!-- chrome -->
<g>
 <circle cx="274.800" cy="748" r="14.500" fill="#e8382c"/>
 <path d="M274.800 748 L262.200 740.800 A14.500 14.500 0 0 0 267.600 760.600 L274.800 748Z" fill="#2fa84a"/>
 <path d="M274.800 748 L267.600 760.600 A14.500 14.500 0 0 0 287.400 740.800 H274.800Z" fill="#fbc618"/>
 <path d="M262.200 740.800 A14.500 14.500 0 0 1 287.400 740.800 H274.800Z" fill="#e8382c"/>
 <path d="M274.800 748 L262.200 740.800 A14.500 14.500 0 0 0 267.600 760.600Z" fill="#2fa84a"/>
 <circle cx="274.800" cy="748" r="6.600" fill="#fff"/>
 <circle cx="274.800" cy="748" r="5.200" fill="#3a86e8"/>
</g>
<!-- adobe -->
<g>
 <rect x="322.700" y="733.300" width="28.300" height="26.400" fill="url(#adG)"/>
 <path d="M328 755 C333 750,337 742,336.500 738.500 C336 735.500,333.800 737.500,335 741 C336.500 746,341 751,345.500 751.500 C348 751.500,346.500 749.300,343 749.600 C338 750,332 752,328 755Z" fill="none" stroke="#fff" stroke-width="1.500"/>
</g>
<!-- tray -->
<path d="M1120 751.400 L1123.600 746.800 L1127.300 751.400Z" fill="#fff"/>
<!-- flag -->
<path d="M1189.300 742 V755.800" stroke="#fff" stroke-width="1.500"/>
<path d="M1191 743 h6.500 q2 2 5.500 .6 l-1.700 5.600 q-3 1 -4.800 -.8 h-5.500z" fill="#fff"/>
<!-- battery -->
<rect x="1216.700" y="743.700" width="8" height="11.600" rx="1.300" fill="none" stroke="#fff" stroke-width="1.400"/><rect x="1218.800" y="741.700" width="3.800" height="2" fill="#fff"/><rect x="1218.400" y="748" width="4.600" height="5.800" fill="#fff"/>
<!-- signal -->
<path d="M1237.500 754 v-1.200 M1240.300 754 v-2.500 M1243.100 754 v-4.500 M1245.900 754 v-6.500 M1248.700 754 v-8.500" stroke="#fff" stroke-width="2"/>
<path d="M1251 754 v-10" stroke="#fff" stroke-width="1.300"/>
<!-- speaker -->
<path d="M1261 746.300 h2.800 l4 -4 v13.400 l-4 -4 h-2.800z" fill="#fff"/>
<path d="M1270 746 q1.800 3 0 6 M1272.300 744.300 q3 4.700 0 9.400" fill="none" stroke="#fff" stroke-width="1.100"/>
</svg>
<!-- show desktop -->
<div class="abs" style="left:1352px;top:1px;width:14px;height:38px;border-left:1px solid rgba(255,255,255,.45);background:linear-gradient(100deg,rgba(255,255,255,.3),rgba(255,255,255,.08) 60%,rgba(255,255,255,.15));box-shadow:-1px 0 0 rgba(0,0,0,.6),inset 0 1px 0 rgba(255,255,255,.4)"></div>

<span class="t" style="left:1088.4px;top:10.2px;font-size:12.4px;line-height:16px;color:#fff;transform:scaleX(0.842);">EN</span>
<span class="t" style="left:1141.8px;top:14.0px;font-size:11.5px;line-height:14px;color:#ffd21e;transform:scaleX(0.906);">48</span>
<span class="t" style="left:1166.0px;top:14.0px;font-size:11.5px;line-height:14px;color:#1eff8a;transform:scaleX(0.906);">48</span>
<span class="t" style="left:1303.6px;top:4.7px;font-size:12.4px;line-height:16px;color:#fff;transform:scaleX(0.874);">01:52</span>
<span class="t" style="left:1291.0px;top:21.7px;font-size:12.4px;line-height:16px;color:#fff;transform:scaleX(0.931);">28/6/2012</span></div>
</body>
</html>
